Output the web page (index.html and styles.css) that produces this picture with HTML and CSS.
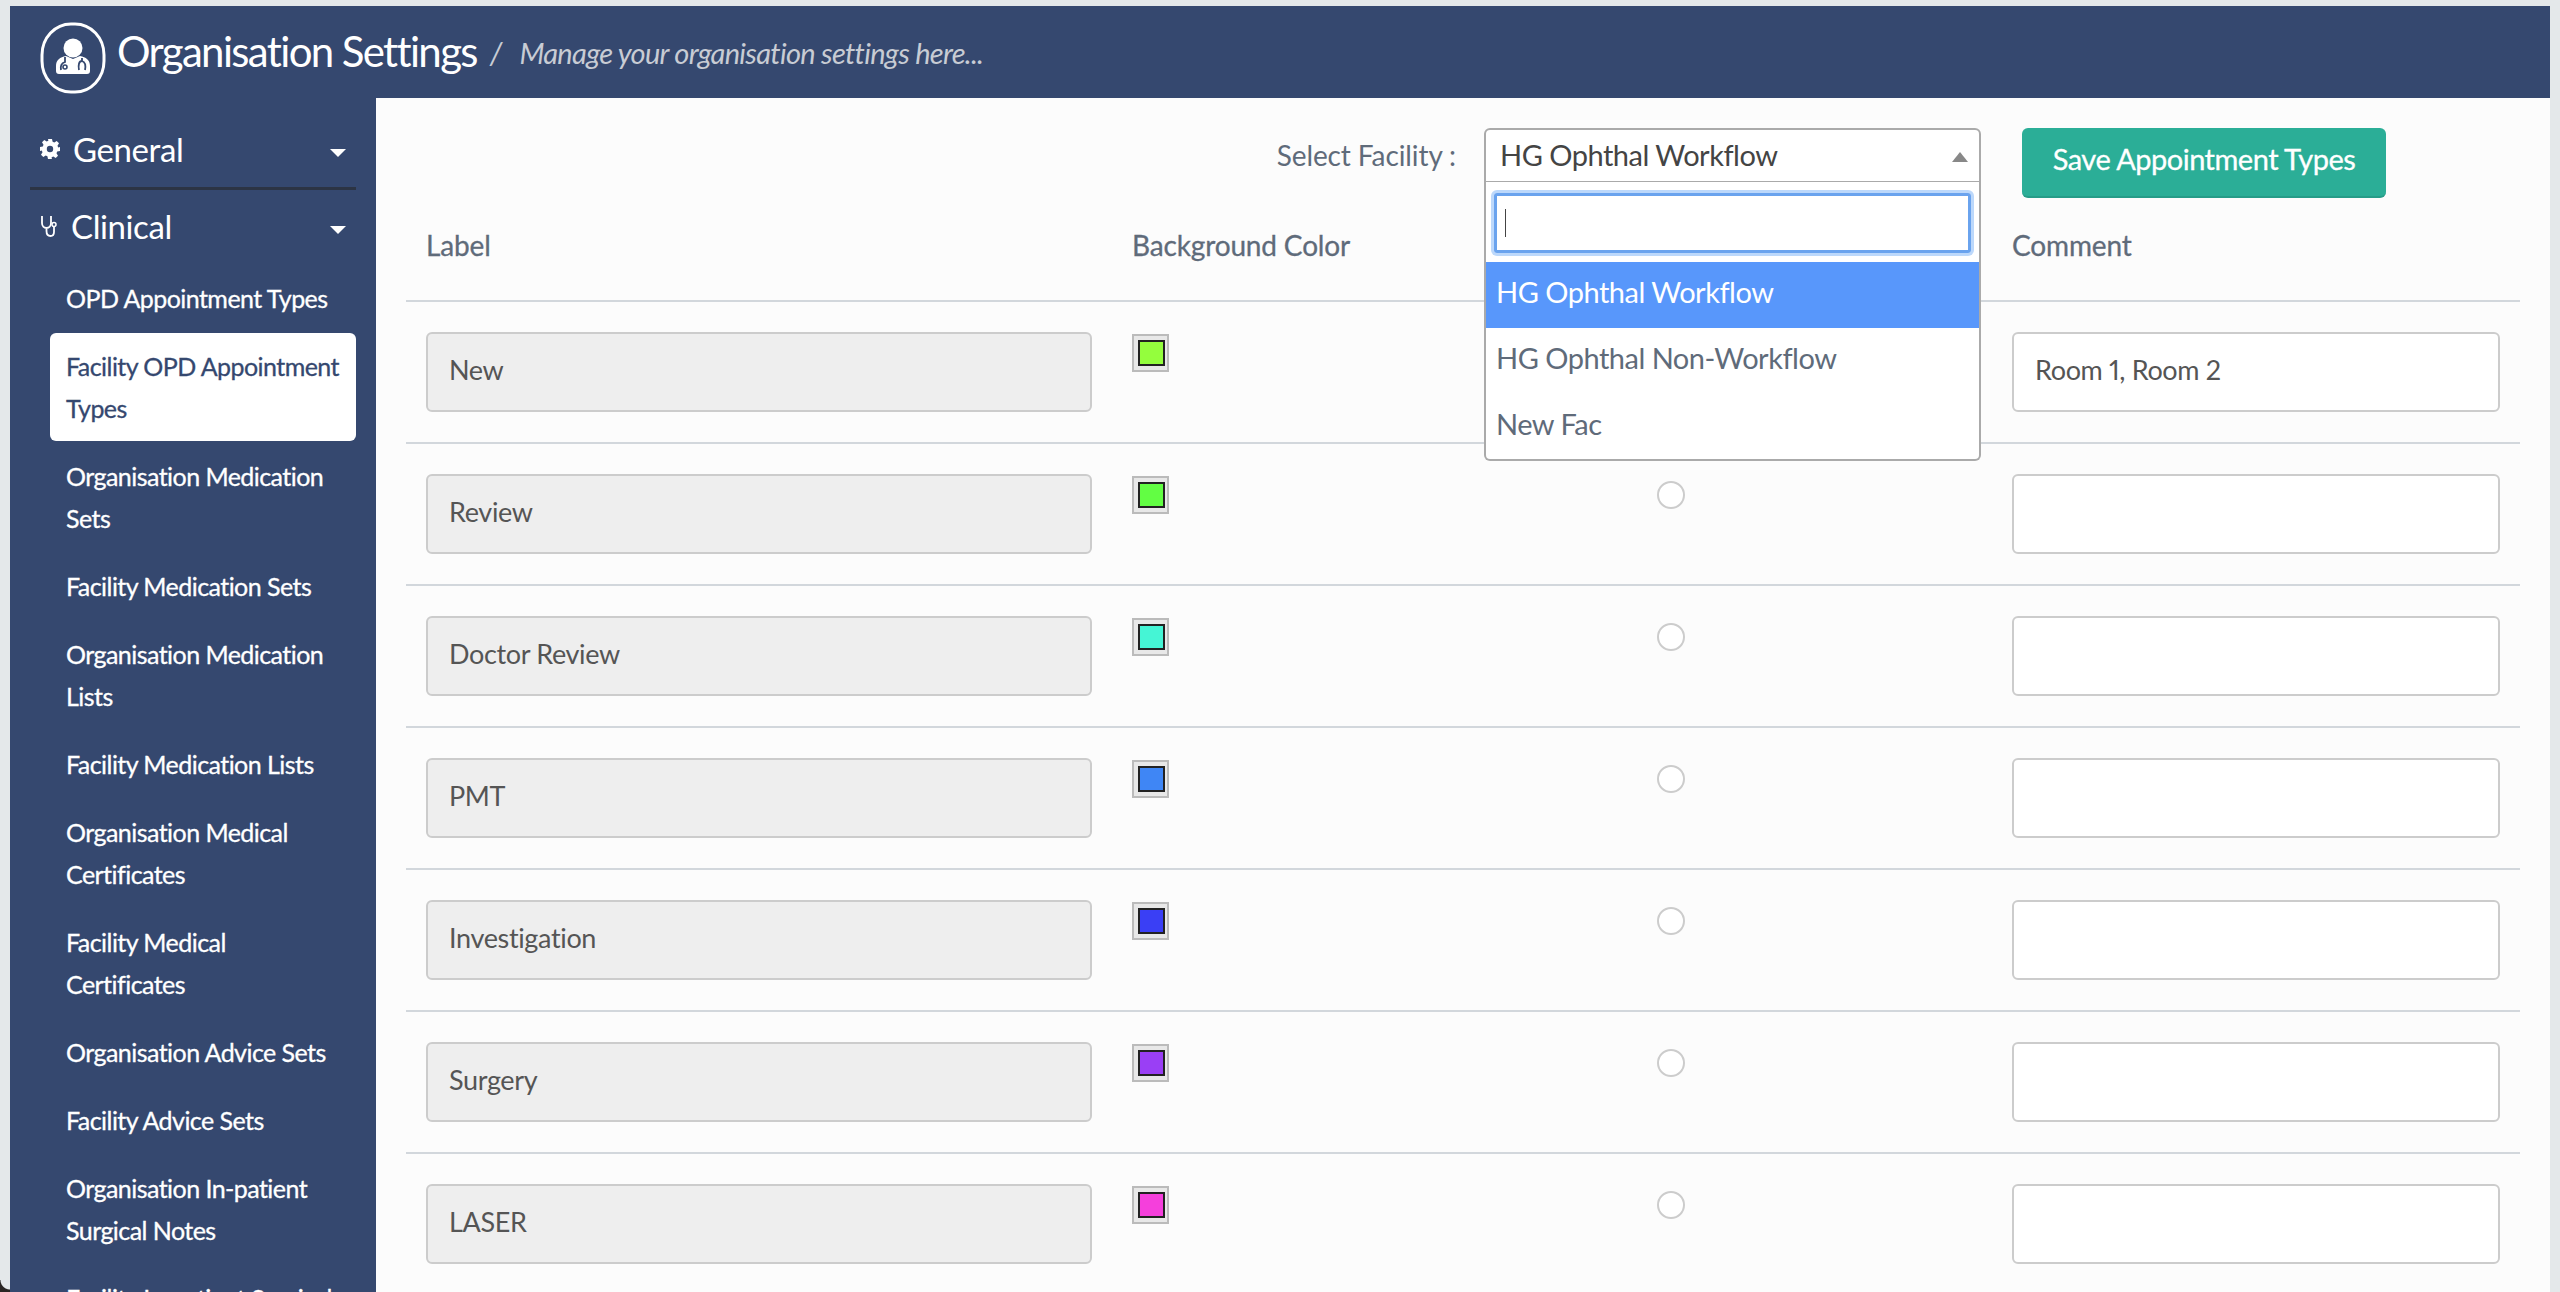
FILE: index.html
```html
<!DOCTYPE html>
<html lang="en">
<head>
    <meta charset="UTF-8">
    <title>Organisation Settings</title>
    <link rel="stylesheet" href="styles.css">
</head>
<body>
    <div class="app">
        <header class="topbar">
            <span class="logo">
                <svg viewBox="0 0 66 72" width="66" height="72">
                    <rect x="2" y="2" width="62" height="68" rx="29" ry="31" fill="none" stroke="#fff" stroke-width="3"/>
                    <circle cx="33" cy="26" r="9.5" fill="#fff"/>
                    <path d="M19 52c-2 0-3-1-3-3v-5c0-6 4-9 10-10l7 3 7-3c6 1 10 4 10 10v5c0 2-1 3-3 3z" fill="#fff"/>
                    <path d="M25 35v5c-3 1-5 3-4 8M42 36v3c3 1 4 4 3 9M39 48c-1-5 0-9 3-9" fill="none" stroke="#35486f" stroke-width="1.8"/>
                    <circle cx="25" cy="45" r="2" fill="none" stroke="#35486f" stroke-width="1.6"/>
                </svg>
            </span>
            <h1 class="title">Organisation Settings</h1>
            <span class="slash">/</span>
            <em class="subtitle">Manage your organisation settings here...</em>
        </header>

        <div class="layout">
            <nav class="sidebar">
                <div class="section section-general">
                    <svg class="section-icon" viewBox="0 0 20 20" width="20" height="20">
                        <path fill="#fff" fill-rule="evenodd" d="M8 0h4l.6 2.8 1.7.7 2.4-1.5 2.3 2.3-1.5 2.4.7 1.7L20 8v4l-2.8.6-.7 1.7 1.5 2.4-2.3 2.3-2.4-1.5-1.7.7L11.9 20H8l-.6-2.8-1.7-.7-2.4 1.5L1 15.700l1.500-2.400-.7-1.700L0 12V8l2.800-.6.7-1.700L2 3.300 4.300 1l2.400 1.500 1.700-.7zM10 6.800a3.200 3.200 0 1 0 0 6.400 3.200 3.200 0 0 0 0-6.400z"/>
                    </svg>
                    <span class="section-name">General</span>
                    <span class="caret"></span>
                </div>
                <div class="section section-clinical">
                    <svg class="section-icon" viewBox="0 0 18 24" width="18" height="24">
                        <path fill="none" stroke="#fff" stroke-width="1.800" d="M2 2v7c0 3 2 5 4.500 5S11 12 11 9V2M6.500 14v3c0 3 1.500 5 4 5s3.500-2 3.500-4v-5"/>
                        <circle cx="14" cy="10.500" r="2" fill="none" stroke="#fff" stroke-width="1.500"/>
                    </svg>
                    <span class="section-name">Clinical</span>
                    <span class="caret"></span>
                </div>
                <ul class="menu">
                    <li>OPD Appointment Types</li>
                    <li class="active">Facility OPD Appointment Types</li>
                    <li>Organisation Medication Sets</li>
                    <li>Facility Medication Sets</li>
                    <li>Organisation Medication Lists</li>
                    <li>Facility Medication Lists</li>
                    <li>Organisation Medical Certificates</li>
                    <li>Facility Medical Certificates</li>
                    <li>Organisation Advice Sets</li>
                    <li>Facility Advice Sets</li>
                    <li>Organisation In-patient Surgical Notes</li>
                    <li>Facility In-patient Surgical Notes</li>
                </ul>
            </nav>

            <main class="content">
                <div class="toolbar">
                    <label class="facility-label">Select Facility :</label>
                    <div class="facility-select">
                        <div class="select-value">HG Ophthal Workflow<span class="select-arrow"></span></div>
                        <div class="select-drop">
                            <div class="select-search"><span class="cursor"></span></div>
                            <div class="select-option selected">HG Ophthal Workflow</div>
                            <div class="select-option">HG Ophthal Non-Workflow</div>
                            <div class="select-option">New Fac</div>
                        </div>
                    </div>
                    <button class="save-btn">Save Appointment Types</button>
                </div>

                <div class="row head">
                    <div>Label</div>
                    <div>Background Color</div>
                    <div></div>
                    <div>Comment</div>
                </div>

                <div class="row">
                    <div class="field locked">New</div>
                    <div class="swatch"><i class="swatch-fill" style="background:#94fe3d"></i></div>
                    <div class="radio-cell"><span class="radio"></span></div>
                    <div class="field">Room 1, Room 2</div>
                </div>
                <div class="row">
                    <div class="field locked">Review</div>
                    <div class="swatch"><i class="swatch-fill" style="background:#62fe43"></i></div>
                    <div class="radio-cell"><span class="radio"></span></div>
                    <div class="field"></div>
                </div>
                <div class="row">
                    <div class="field locked">Doctor Review</div>
                    <div class="swatch"><i class="swatch-fill" style="background:#45f5d5"></i></div>
                    <div class="radio-cell"><span class="radio"></span></div>
                    <div class="field"></div>
                </div>
                <div class="row">
                    <div class="field locked">PMT</div>
                    <div class="swatch"><i class="swatch-fill" style="background:#3f86f5"></i></div>
                    <div class="radio-cell"><span class="radio"></span></div>
                    <div class="field"></div>
                </div>
                <div class="row">
                    <div class="field locked">Investigation</div>
                    <div class="swatch"><i class="swatch-fill" style="background:#3a3ff5"></i></div>
                    <div class="radio-cell"><span class="radio"></span></div>
                    <div class="field"></div>
                </div>
                <div class="row">
                    <div class="field locked">Surgery</div>
                    <div class="swatch"><i class="swatch-fill" style="background:#9a3ff5"></i></div>
                    <div class="radio-cell"><span class="radio"></span></div>
                    <div class="field"></div>
                </div>
                <div class="row">
                    <div class="field locked">LASER</div>
                    <div class="swatch"><i class="swatch-fill" style="background:#f53fdc"></i></div>
                    <div class="radio-cell"><span class="radio"></span></div>
                    <div class="field"></div>
                </div>
            </main>
        </div>
    </div>
</body>
</html>
```

FILE: styles.css
```css
html, body {
    margin: 0;
    height: 100%;
    overflow: hidden;
}
body {
    background: #e4e8ea;
    font-family: Lato, "Open Sans", sans-serif;
    color: #555;
    font-variant-numeric: proportional-nums;
}
/* dark window corner at the bottom left of the capture */
body::after {
    content: "";
    position: absolute;
    left: 0;
    bottom: 0;
    width: 10px;
    height: 12px;
    background: radial-gradient(circle at 100% 0, transparent 9px, #2a2624 10px);
}
.app {
    margin: 6px 10px 0 10px;
    height: 1286px;
    overflow: hidden;
    background: #35486f;
}
.topbar {
    height: 92px;
    display: flex;
    align-items: center;
    padding-left: 30px;
    color: #fff;
}
.logo {
    display: flex;
    margin-top: 12px;
}
.title {
    margin: 0 0 3px 11px;
    font-size: 42px;
    font-weight: 400;
    letter-spacing: -1.65px;
}
.slash {
    margin-left: 13px;
    font-size: 30px;
    font-style: italic;
    color: #c8ccd4;
}
.subtitle {
    margin-left: 17px;
    font-size: 29px;
    letter-spacing: -0.7px;
    color: #c8ccd4;
}
.layout {
    display: flex;
    height: 1194px;
}
.sidebar {
    width: 366px;
    flex: none;
    padding: 0 20px;
    box-sizing: border-box;
    color: #fff;
}
.section {
    display: flex;
    align-items: center;
    height: 74px;
    font-size: 33px;
    letter-spacing: -0.4px;
    padding: 0 10px 0 10px;
}
.section-general {
    height: 92px;
    padding-top: 12px;
    box-sizing: border-box;
    border-bottom: 3px solid #2c3444;
}
.section-clinical {
    height: 71px;
}
.section-icon {
    margin-right: 13px;
}
.section-name {
    flex: 1;
}
.caret {
    width: 0;
    height: 0;
    border-left: 8px solid transparent;
    border-right: 8px solid transparent;
    border-top: 8px solid #fff;
    margin-top: 8px;
}
.menu {
    list-style: none;
    margin: 4px 0 0 20px;
    padding: 0;
    font-size: 25px;
    line-height: 42px;
    letter-spacing: -0.55px;
}
.menu li {
    padding: 12px 16px;
    margin-bottom: 2px;
    border-radius: 6px;
    -webkit-text-stroke: 0.3px;
}
.menu li.active {
    background: #fff;
    color: #35486f;
}
.content {
    flex: 1;
    background: #fcfcfc;
    padding: 30px 30px 0;
}
.toolbar {
    display: flex;
    align-items: flex-start;
    justify-content: flex-end;
    padding-right: 134px;
}
.facility-label {
    font-size: 28px;
    letter-spacing: -0.1px;
    color: #5f6b7a;
    line-height: 54px;
    margin-right: 28px;
}
.facility-select {
    position: relative;
    width: 497px;
    height: 55px;
    margin-right: 41px;
}
.select-value {
    box-sizing: border-box;
    height: 55px;
    padding-left: 14px;
    border: 2px solid #aaa;
    border-radius: 6px 6px 0 0;
    background: #fff;
    font-size: 29px;
    line-height: 50px;
    letter-spacing: -0.5px;
    color: #444;
}
.select-arrow {
    position: absolute;
    right: 13px;
    top: 24px;
    width: 0;
    height: 0;
    border-left: 8px solid transparent;
    border-right: 8px solid transparent;
    border-bottom: 10px solid #888;
}
.select-drop {
    position: absolute;
    z-index: 2;
    left: 0;
    right: 0;
    top: 54px;
    height: 279px;
    box-sizing: border-box;
    border: 2px solid #aaa;
    border-top: 0;
    border-radius: 0 0 6px 6px;
    background: #fff;
    padding-top: 11px;
}
.select-search {
    box-sizing: border-box;
    height: 60px;
    margin: 0 8px 9px;
    padding-left: 8px;
    display: flex;
    align-items: center;
    border: 3px solid #6aa3ee;
    box-shadow: 0 0 0 3px #bcd8fb;
    border-radius: 3px;
}
.cursor {
    width: 1px;
    height: 28px;
    background: #444;
}
.select-option {
    height: 66px;
    padding-left: 10px;
    font-size: 29px;
    line-height: 60px;
    letter-spacing: -0.5px;
    color: #5f6b7a;
}
.select-option.selected {
    background: #5897fb;
    color: #fff;
}
.save-btn {
    width: 364px;
    height: 70px;
    border: 0;
    border-bottom: 2px solid #269c88;
    border-radius: 6px;
    background: #2bae97;
    color: #fff;
    font-family: inherit;
    font-size: 29px;
    letter-spacing: -0.5px;
    padding: 0 0 8px;
    -webkit-text-stroke: 0.3px;
}
.row {
    display: grid;
    grid-template-columns: 706px 520px 360px 488px;
    padding: 30px 20px 0;
    height: 142px;
    box-sizing: border-box;
    border-top: 2px solid #d2d7dc;
}
.row.head {
    border-top: 0;
    height: 102px;
    padding-top: 27px;
    font-size: 28px;
    letter-spacing: -0.15px;
    line-height: 40px;
    color: #5f6b7a;
    -webkit-text-stroke: 0.3px;
}
.field {
    box-sizing: border-box;
    height: 80px;
    padding-left: 21px;
    border: 2px solid #ccc;
    border-radius: 6px;
    background: #fff;
    font-size: 27px;
    line-height: 72px;
    letter-spacing: -0.35px;
    color: #555;
}
.field.locked {
    width: 666px;
    background: #eee;
}
.swatch {
    box-sizing: border-box;
    width: 37px;
    height: 38px;
    margin-top: 2px;
    padding: 4px 2px 4px 4px;
    border: 2px solid #bbb;
    background: #e8e8e8;
}
.swatch-fill {
    display: block;
    height: 100%;
    width: 100%;
    box-sizing: border-box;
    border: 2px solid #222;
}
.radio-cell {
    padding: 7px 0 0 5px;
}
.radio {
    display: block;
    width: 28px;
    height: 28px;
    box-sizing: border-box;
    border: 2px solid #ccc;
    border-radius: 50%;
    background: #fff;
}
```
